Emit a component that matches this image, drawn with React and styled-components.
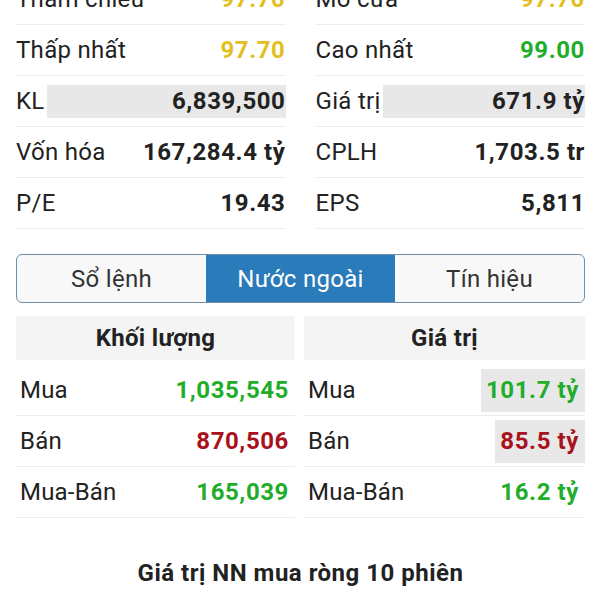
import React from "react";
import styled, { createGlobalStyle } from "styled-components";

const GlobalStyle = createGlobalStyle`
  html, body {
    margin: 0;
    padding: 0;
    background: #ffffff;
    overflow: hidden;
  }
  body {
    font-family: Roboto, "Noto Sans", "Liberation Sans", sans-serif;
    color: #222;
  }
`;

const colors = {
  yellow: "#e3bf1d",
  green: "#1fad2a",
  red: "#a8121c",
  dark: "#222222",
};

const Page = styled.div`
  width: 600px;
  height: 600px;
  overflow: hidden;
`;

const Inner = styled.div`
  margin-top: -26px;
  padding: 0 15px 0 16px;
`;

const StatsGrid = styled.div`
  display: grid;
  grid-template-columns: 1fr 1fr;
  column-gap: 30px;
`;

const StatRow = styled.div`
  display: flex;
  align-items: center;
  height: 50px;
  border-bottom: 1px solid #ededed;
  font-size: 24px;
  letter-spacing: 0.3px;
`;

const StatLabel = styled.span`
  color: ${colors.dark};
  white-space: nowrap;
`;

const StatValue = styled.span`
  flex: 1;
  text-align: right;
  font-weight: 700;
  letter-spacing: 0.6px;
  color: ${({ $color }) => $color || colors.dark};
  background: ${({ $flash }) => ($flash ? "#e8e8e8" : "transparent")};
  line-height: 33px;
  margin-left: 2px;
`;

const Tabs = styled.div`
  display: grid;
  grid-template-columns: 1fr 1fr 1fr;
  margin-top: 25px;
  height: 47px;
  border: 1px solid #6f8fa8;
  border-radius: 6px;
  overflow: hidden;
  background: #f8f8f8;
`;

const Tab = styled.div`
  display: flex;
  align-items: center;
  justify-content: center;
  font-size: 24px;
  letter-spacing: 0.3px;
  color: ${({ $active }) => ($active ? "#ffffff" : "#333")};
  background: ${({ $active }) => ($active ? "#2a7bba" : "transparent")};
`;

const Foreign = styled.div`
  display: grid;
  grid-template-columns: 279px 281px;
  column-gap: 9px;
  margin-top: 13px;
`;

const Table = styled.div`
  display: flex;
  flex-direction: column;
`;

const TableHead = styled.div`
  height: 44px;
  display: flex;
  align-items: center;
  justify-content: center;
  background: #f4f4f4;
  font-size: 24px;
  letter-spacing: 0.3px;
  font-weight: 700;
  color: ${colors.dark};
  margin-bottom: 5px;
`;

const TableRow = styled.div`
  display: flex;
  align-items: center;
  justify-content: space-between;
  height: 50px;
  border-bottom: 1px solid #ededed;
  font-size: 24px;
  letter-spacing: 0.2px;
  padding-left: 4px;
`;

const Cell = styled.span`
  font-weight: 700;
  letter-spacing: 0.6px;
  color: ${({ $color }) => $color};
  background: ${({ $flash }) => ($flash ? "#e8e8e8" : "transparent")};
  padding: 0 6px 0 5px;
  line-height: 43px;
`;

const ChartTitle = styled.div`
  margin-top: 41px;
  text-align: center;
  font-size: 24px;
  letter-spacing: 0.5px;
  font-weight: 700;
  color: ${colors.dark};
`;

const stats = [
  [
    { label: "Tham chiếu", value: "97.70", color: colors.yellow },
    { label: "Mở cửa", value: "97.70", color: colors.yellow },
  ],
  [
    { label: "Thấp nhất", value: "97.70", color: colors.yellow },
    { label: "Cao nhất", value: "99.00", color: colors.green },
  ],
  [
    { label: "KL", value: "6,839,500", flash: true },
    { label: "Giá trị", value: "671.9 tỷ", flash: true },
  ],
  [
    { label: "Vốn hóa", value: "167,284.4 tỷ" },
    { label: "CPLH", value: "1,703.5 tr" },
  ],
  [
    { label: "P/E", value: "19.43" },
    { label: "EPS", value: "5,811" },
  ],
];

const volume = [
  { label: "Mua", value: "1,035,545", color: colors.green },
  { label: "Bán", value: "870,506", color: colors.red },
  { label: "Mua-Bán", value: "165,039", color: colors.green },
];

const amount = [
  { label: "Mua", value: "101.7 tỷ", color: colors.green, flash: true },
  { label: "Bán", value: "85.5 tỷ", color: colors.red, flash: true },
  { label: "Mua-Bán", value: "16.2 tỷ", color: colors.green },
];

const ForeignTable = ({ title, rows }) => (
  <Table>
    <TableHead>{title}</TableHead>
    {rows.map((r) => (
      <TableRow key={r.label}>
        <span>{r.label}</span>
        <Cell $color={r.color} $flash={r.flash}>
          {r.value}
        </Cell>
      </TableRow>
    ))}
  </Table>
);

const App = () => {
  return (
    <Page>
      <GlobalStyle />
      <Inner>
        <StatsGrid>
          {stats.flat().map((s) => (
            <StatRow key={s.label}>
              <StatLabel>{s.label}</StatLabel>
              <StatValue $color={s.color} $flash={s.flash}>
                {s.value}
              </StatValue>
            </StatRow>
          ))}
        </StatsGrid>

        <Tabs>
          <Tab>Sổ lệnh</Tab>
          <Tab $active>Nước ngoài</Tab>
          <Tab>Tín hiệu</Tab>
        </Tabs>

        <Foreign>
          <ForeignTable title="Khối lượng" rows={volume} />
          <ForeignTable title="Giá trị" rows={amount} />
        </Foreign>

        <ChartTitle>Giá trị NN mua ròng 10 phiên</ChartTitle>
      </Inner>
    </Page>
  );
};

export default App;
